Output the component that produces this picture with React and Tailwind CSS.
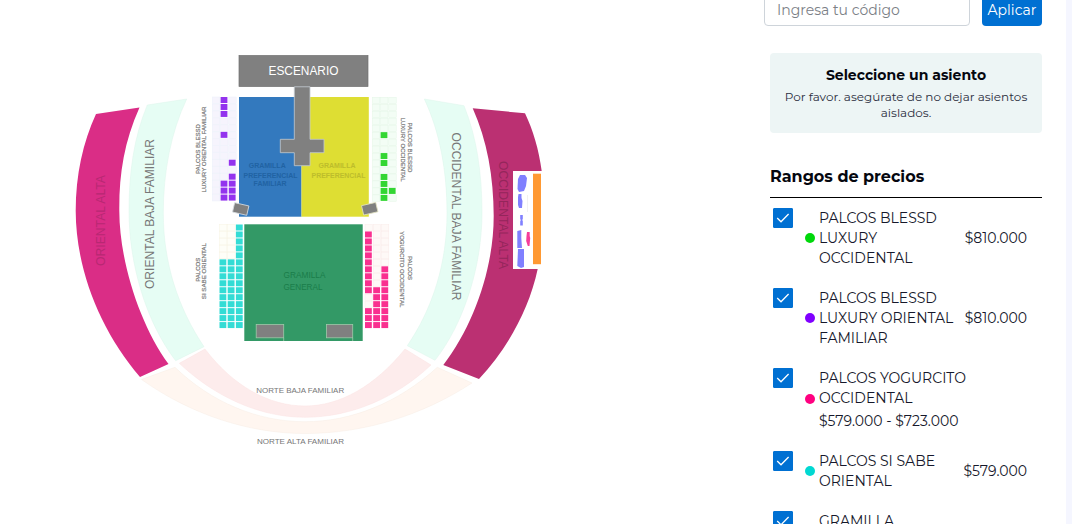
import { useState } from "react"

const ranges = [
    { id: 1, lines: ["PALCOS BLESSD", "LUXURY", "OCCIDENTAL"], price: "$810.000", dot: "bg-[#00d80b]" },
    { id: 2, lines: ["PALCOS BLESSD", "LUXURY ORIENTAL", "FAMILIAR"], price: "$810.000", dot: "bg-[#8000ff]" },
    { id: 3, lines: ["PALCOS YOGURCITO", "OCCIDENTAL"], price: "$579.000 - $723.000", dot: "bg-[#ff0080]", below: true },
    { id: 4, lines: ["PALCOS SI SABE", "ORIENTAL"], price: "$579.000", dot: "bg-[#00d8d2]" },
    { id: 5, lines: ["GRAMILLA"], price: "", dot: "bg-transparent" },
]

// every string is a column of boxes, x = available
const boxes = [
    { x: 212.4, y: 97, color: "#9333ee", empty: "#f6f4fd", line: "#eceffa", cols: ["...............", "xxx..x......xxx", ".........x.xxxx"] },
    { x: 372.4, y: 97.3, color: "#33d633", empty: "#f3fdf5", line: "#e3f6e6", cols: ["...............", ".....x..xx.xxxx", ".............x."] },
    { x: 219.5, y: 224.5, color: "#33dcd5", empty: "#fefef8", line: "#f7f4e4", cols: [".....xxxxxxxxxx", ".....xxxxxxxxxx", "xxxxxxxxxxxxxxx"] },
    { x: 365, y: 224.5, color: "#f9308f", empty: "#fef9f7", line: "#faebe9", cols: [".xxxxxxxxx..xxx", ".........xxxxxx", "......xxxxxxxxx"] },
]

function Boxes({ x, y, color, empty, line, cols }){
    return cols.map((col, c) => col.split("").map((seat, r) => (
        <rect
            key={c + "-" + r}
            x={x + c * 8.2}
            y={y + r * 6.97}
            width={seat === "x" ? 6.8 : 7.4}
            height={seat === "x" ? 6 : 6.4}
            fill={seat === "x" ? color : empty}
            stroke={seat === "x" ? "none" : line}
            strokeWidth="0.5"
        />
    )))
}

function Label({ x, y, size, width, rotate = 0, fill = "#777", children }){
    return (
        <text
            transform={`translate(${x} ${y}) rotate(${rotate})`}
            y={size * 0.36}
            fontSize={size}
            textAnchor="middle"
            textLength={width}
            lengthAdjust="spacingAndGlyphs"
            fill={fill}
        >
            {children}
        </text>
    )
}

function SeatMap(){
    return (
        <svg width="740" height="524" viewBox="0 0 740 524" fontFamily="'Liberation Sans', Arial, sans-serif" className="shrink-0">
            {/* side stands */}
            <path fill="#da2d86" d="M96 114 L139.5 107.5 C124 142 119 175 119.3 211 C119.5 262 140 325 168.5 364 L140 377 C100 330 76 270 75.7 211 C75.7 175 83 142 96 114Z" />
            <path fill="#e6fdf4" stroke="#dcf5eb" strokeWidth="0.5" d="M147.3 105 L186.7 99 C171 132 163.3 172 163.3 213 C163.3 263 178 308 204 346.7 L175.7 360.7 C146 322 129 264 129 211 C129 172 134 137 147.3 105Z" />
            <path fill="#e6fdf4" stroke="#dcf5eb" strokeWidth="0.5" d="M424.3 99 L464 105.7 C477 138 482 174 482 213 C482 264 465 322 435 360.3 L407.3 345.7 C433 308 447 263 447 213 C447 172 440 132 424.3 99Z" />
            <path fill="#bb3072" d="M472.7 108.3 L525 113.3 C533 130 539 150 541.7 171 L541.7 240 L537.7 269 C529 310 507 349 479 379 L443.3 365 C474 325 493.7 268 493.7 216 C493.7 177 487 140 472.7 108.3Z" />
            <rect x="513" y="171" width="30" height="98" fill="#fff" />
            <rect x="533" y="173.7" width="8" height="90.5" fill="#ff9933" />
            <g fill="#8080ff">
                <path d="M520 175 h5 l2 3 -1 8 -2 5 -5 1 -1.5 -3 0.5 -10Z" />
                <path d="M518.5 194 h3 v4 l1 3 -0.5 7 h-3 l-1 -3 v-8Z" />
                <path d="M520.2 215 h2.6 v4 l-0.6 1 0.6 1 v4.5 h-2.6 v-4 l0.6 -1.5 -0.6 -1Z" />
                <path d="M517.3 231 l4 -1 v8 l0.7 10 h-4.7Z" />
                <path d="M518 249 h6 v18 l-3 1 -3.7 -2Z" />
            </g>
            <path fill="#f53d9b" d="M527 232 h2.7 v4 l0.5 2 -0.7 8 h-1.7 l-1.6 -5 0.3 -5Z" />
            <path stroke="#f1f1f1" d="M527.5 195 v17" />

            {/* north stands */}
            <path fill="#fdecec" stroke="#fae3e3" strokeWidth="0.5" d="M205 349 L179.3 363.3 C215 397 260 417.3 305 417.3 C352 417.3 397 397 431 365 L405 349 C375 386 340 406 305 406 C269 406 233 386 205 349Z" />
            <path fill="#fff6f0" stroke="#f7ece4" strokeWidth="0.5" d="M175 367.3 L141.5 379.5 C190 414 248 433.5 305 433.5 C365 433.5 423 415 472 383 L437.3 367.3 C398 403 351 421.7 305 421.7 C257 421.7 211 402 175 367.3Z" />

            {/* field */}
            <rect x="239" y="97" width="62.5" height="119.7" fill="#3379be" />
            <rect x="301.5" y="97" width="67.3" height="119.7" fill="#dede33" />
            <rect x="244.3" y="224.3" width="118.4" height="116.7" fill="#339966" />
            <rect x="239" y="55.5" width="129" height="31" fill="#808080" stroke="#6f6f6f" strokeWidth="0.7" />
            <path fill="#808080" stroke="#c4cbd2" strokeWidth="0.8" d="M294.3 86.8 H310 V139.3 H324 V152.7 H310 V165.7 H294.3 V152.7 H280.3 V139.3 H294.3Z" />
            <rect x="-7.3" y="-4.8" width="14.6" height="9.6" fill="#808080" stroke="#d5dbe0" strokeWidth="0.8" transform="translate(240.7 209) rotate(13)" />
            <rect x="-7.3" y="-4.8" width="14.6" height="9.6" fill="#808080" stroke="#dfdfc0" strokeWidth="0.8" transform="translate(369.7 208.7) rotate(-13)" />
            <rect x="256.2" y="324.5" width="27.5" height="13.3" fill="#808080" stroke="#9fc9a9" strokeWidth="0.8" />
            <rect x="326.4" y="324.5" width="26.3" height="13.3" fill="#808080" stroke="#9fc9a9" strokeWidth="0.8" />
            <path stroke="#9fc9a9" strokeWidth="0.8" d="M283.7 338 v3 M352.7 338 v3" />

            {boxes.map(b => <Boxes key={b.x} {...b} />)}

            <Label x={303.5} y={71} size={12.3} width={70} fill="#fff">ESCENARIO</Label>
            <g fontWeight="bold">
                <Label x={267.2} y={165.8} size={6.6} width={37} fill="#2163a3">GRAMILLA</Label>
                <Label x={270.5} y={175.8} size={6.6} width={54} fill="#2163a3">PREFERENCIAL</Label>
                <Label x={270} y={183.6} size={6.6} width={33} fill="#2163a3">FAMILIAR</Label>
                <Label x={337} y={165.8} size={6.6} width={37} fill="#bdbd2b">GRAMILLA</Label>
                <Label x={338.5} y={175.8} size={6.6} width={54} fill="#bdbd2b">PREFERENCIAL</Label>
            </g>
            <Label x={304.5} y={275.3} size={8.2} width={42} fill="#1a7d4a">GRAMILLA</Label>
            <Label x={303} y={287.2} size={8.2} width={39} fill="#1a7d4a">GENERAL</Label>

            <Label x={100.5} y={220.5} size={12.5} width={91} rotate={-90} fill="#b82873">ORIENTAL ALTA</Label>
            <Label x={149} y={214} size={12.5} width={150} rotate={-90}>ORIENTAL BAJA FAMILIAR</Label>
            <Label x={456} y={216.5} size={12.5} width={168} rotate={90}>OCCIDENTAL BAJA FAMILIAR</Label>
            <Label x={503.3} y={215} size={12.5} width={108} rotate={90} fill="#94265b">OCCIDENTAL ALTA</Label>

            <g stroke="#777" strokeWidth="0.2">
                <Label x={197.5} y={149} size={5.8} width={50} rotate={-90}>PALCOS BLESSD</Label>
                <Label x={204.2} y={149.5} size={5.8} width={86} rotate={-90}>LUXURY ORIENTAL FAMILIAR</Label>
                <Label x={410} y={147.5} size={5.8} width={50} rotate={90}>PALCOS BLESSD</Label>
                <Label x={403.3} y={149.7} size={5.8} width={64} rotate={90}>LUXURY OCCIDENTAL</Label>
                <Label x={197.5} y={269.8} size={5.8} width={24} rotate={-90}>PALCOS</Label>
                <Label x={204.2} y={271.2} size={5.8} width={56} rotate={-90}>SI SABE ORIENTAL</Label>
                <Label x={409.7} y={268} size={5.8} width={24} rotate={90}>PALCOS</Label>
                <Label x={402.5} y={269.2} size={5.8} width={76} rotate={90}>YOGURCITO OCCIDENTAL</Label>
            </g>

            <Label x={300.2} y={390.5} size={8} width={88}>NORTE BAJA FAMILIAR</Label>
            <Label x={300.5} y={441.3} size={8} width={87}>NORTE ALTA FAMILIAR</Label>
        </svg>
    )
}

function PriceRange({ range, checked, onToggle }){
    return (
        <div className="flex items-start pl-[3px] pr-[15px]">
            <button
                onClick={onToggle}
                className={"flex size-5 shrink-0 items-center justify-center rounded-[1px] border border-[#0070d2] "
                + (checked ? "bg-[#0070d2]" : "bg-white")}
            >
                {checked && (
                    <svg width="14" height="12" viewBox="0 0 14 12" fill="none" stroke="white" strokeWidth="1.3">
                        <path d="M1.2 6 L5 9.8 L12.6 2" />
                    </svg>
                )}
            </button>
            <div className={"ml-3 flex grow " + (range.below ? "items-start" : "items-center")}>
                <span className={"mr-1 size-2.5 shrink-0 rounded-full " + range.dot + (range.below ? " mt-[26px]" : "")}></span>
                <div className="whitespace-nowrap">
                    {range.lines.map(line => <div key={line}>{line}</div>)}
                    {range.below && <div className="mt-[3px]">{range.price}</div>}
                </div>
                {!range.below && <div className="ml-auto">{range.price}</div>}
            </div>
        </div>
    )
}

export default function App(){
    const [code, setCode] = useState("")
    const [hidden, setHidden] = useState({})

    return (
        <div className="flex h-screen overflow-hidden bg-white font-['Montserrat','Inter',sans-serif] text-[#16182b]">
            <SeatMap />
            <div className="flex w-[302px] shrink-0 flex-col pl-6">
                <div className="-mt-3 flex h-[38px] shrink-0 gap-3">
                    <input
                        type="text"
                        value={code}
                        onChange={e => setCode(e.target.value)}
                        placeholder="Ingresa tu código"
                        className="h-[38px] w-[206px] rounded border border-[#ced4da] px-3 pt-1.5 text-sm outline-none placeholder:text-[#7b8086]"
                    />
                    <button className="flex h-[38px] w-[60px] items-center justify-center rounded bg-[#0070d2] pt-1.5 text-sm text-white">
                        Aplicar
                    </button>
                </div>

                <div className="mt-[27px] ml-1.5 h-20 w-[272px] shrink-0 rounded bg-[#edf5f5] pt-3 text-center">
                    <div className="text-[14px] leading-5 font-bold text-[#05070f]">Seleccione un asiento</div>
                    <div className="mt-1 text-[12px] leading-4 text-[#2b2e40]">
                        Por favor. asegúrate de no dejar asientos<br />aislados.
                    </div>
                </div>

                <div className="mt-8 ml-1.5 w-[272px] shrink-0 border-b border-black pb-2 text-[16px] leading-6 font-bold text-[#05070f]">
                    Rangos de precios
                </div>

                <div className="mt-2.5 ml-1.5 flex w-[272px] flex-col gap-5 text-[14px] leading-5">
                    {ranges.map(range => (
                        <PriceRange
                            key={range.id}
                            range={range}
                            checked={!hidden[range.id]}
                            onToggle={() => setHidden(prev => ({...prev, [range.id]: !prev[range.id]}))}
                        />
                    ))}
                </div>
            </div>
            <div className="ml-6 grow bg-[#f5f6ff]"></div>
        </div>
    )
}
